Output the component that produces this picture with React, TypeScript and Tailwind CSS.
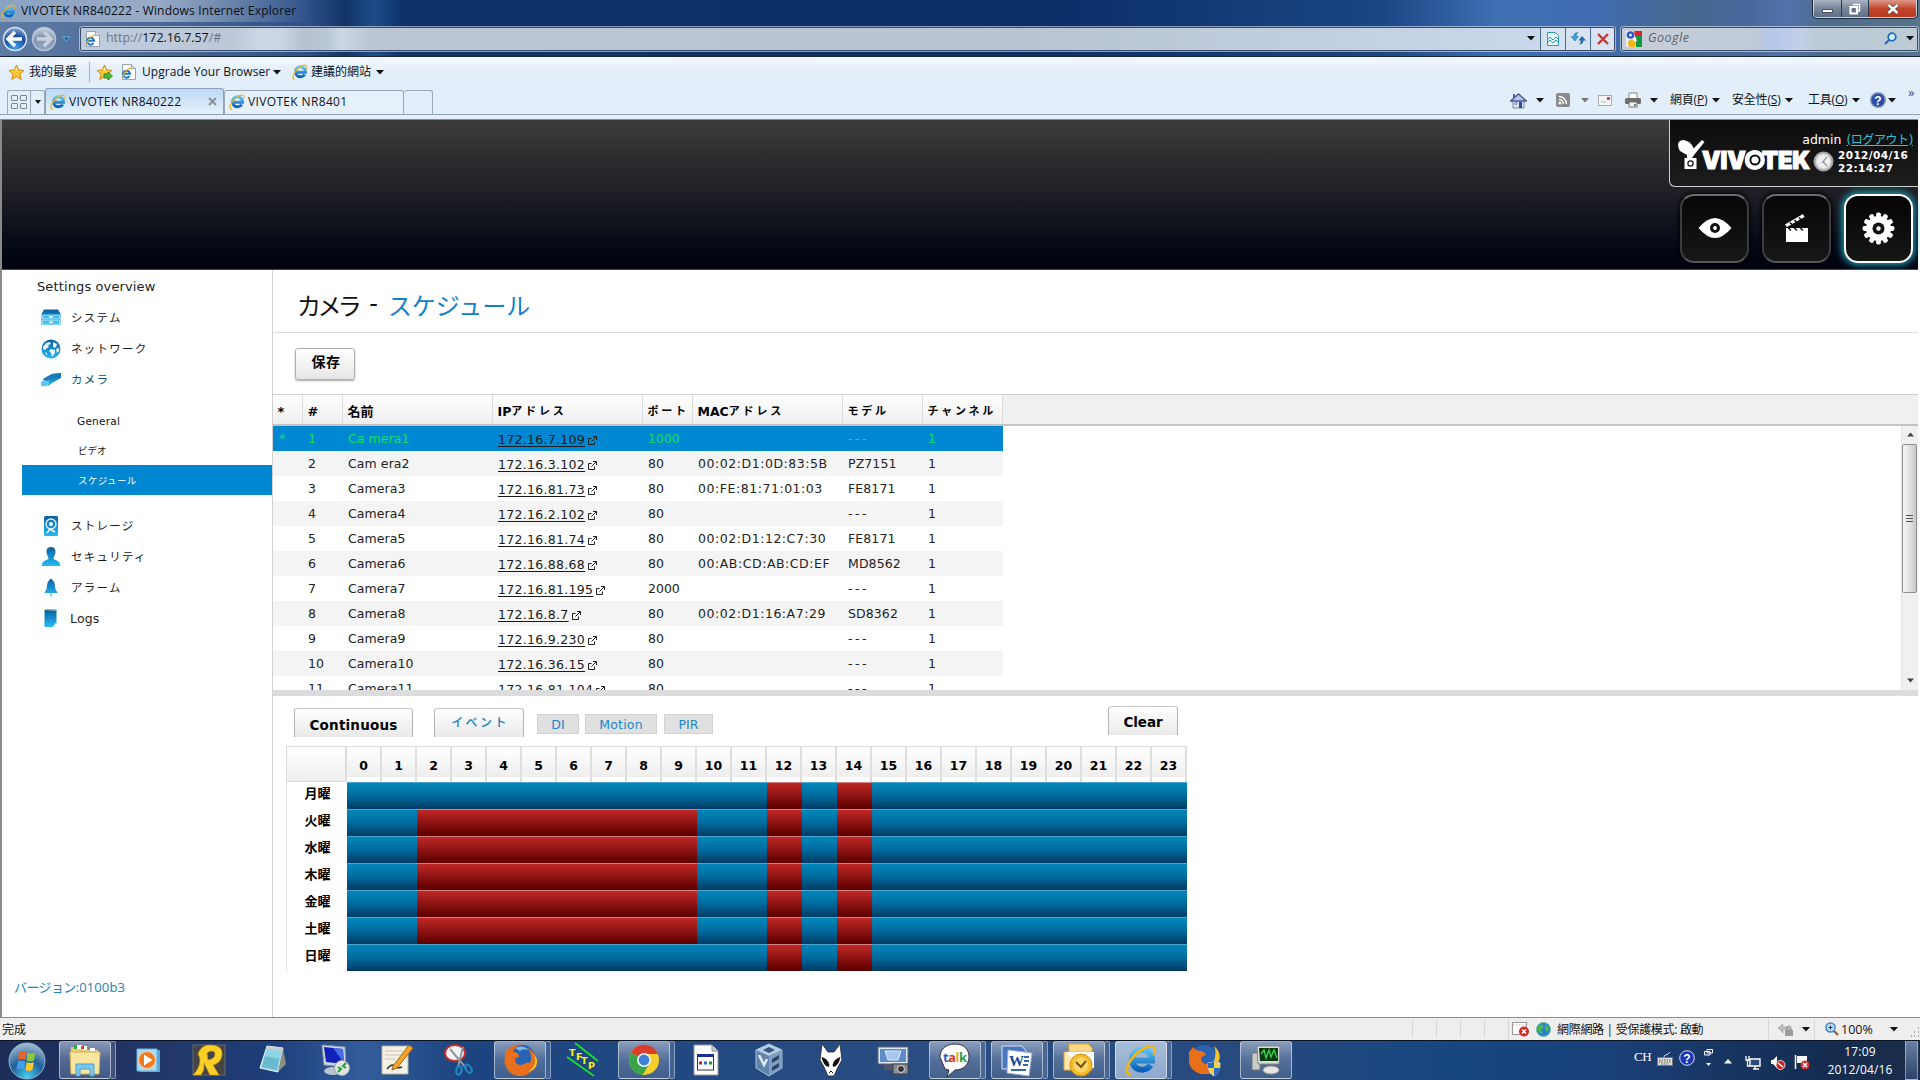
import React from "react";

const UI = "font-['Open_Sans','Noto_Sans_CJK_TC',sans-serif]";
const VERDANA = "font-['DejaVu_Sans','Noto_Sans_CJK_JP',sans-serif]";

/* ---------- small shared icons ---------- */

function Caret({ color = "#111", className = "" }: { color?: string; className?: string }) {
  return (
    <svg className={`shrink-0 ${className}`} width="8" height="5" viewBox="0 0 8 5">
      <path d="M0 0h8L4 4.5z" fill={color} />
    </svg>
  );
}

function IeIcon({ size = 16, className = "" }: { size?: number; className?: string }) {
  return (
    <svg className={`shrink-0 ${className}`} width={size} height={size} viewBox="0 0 32 32">
      <defs>
        <linearGradient id="ieg" x1="0" y1="0" x2="0" y2="1">
          <stop offset="0" stopColor="#5cc4f5" />
          <stop offset="1" stopColor="#0a62b8" />
        </linearGradient>
      </defs>
      <path d="M25.500 21A10 10 0 1 1 27 16.500H9" fill="none" stroke="url(#ieg)" strokeWidth="6" />
      <path d="M29 3C24 0 12 7 6 16S1 31 6 30" fill="none" stroke="#f0b41c" strokeWidth="2.600" />
      <path d="M29 3c2 1.500 1 5-1 8" fill="none" stroke="#f0b41c" strokeWidth="2" />
    </svg>
  );
}

function IePage({ className = "" }: { className?: string }) {
  return (
    <svg className={`shrink-0 ${className}`} width="15" height="16" viewBox="0 0 15 16">
      <path d="M1.500.500h9l4 4v11h-13z" fill="#fff" stroke="#9aa3ad" />
      <path d="M10.500.500v4h4" fill="#dde4ea" stroke="#9aa3ad" />
      <path d="M8.500 12A3.500 3.500 0 1 1 9 9.800H3" fill="none" stroke="#1a7ac9" strokeWidth="2" />
      <path d="M10 4.500C7 4 2 9 1.500 13.500" fill="none" stroke="#e8ae1a" strokeWidth="1.200" />
    </svg>
  );
}

function Star({ plus = false }: { plus?: boolean }) {
  return (
    <svg className="shrink-0" width="17" height="17" viewBox="0 0 17 17">
      <path d="M8.500 1l2.200 5 5.300.5-4 3.600 1.200 5.400-4.700-2.900-4.700 2.900L5 10.100l-4-3.600 5.300-.5z" fill="#fdc436" stroke="#d88a10" />
      <path d="M8.500 3l1.300 3.600H7z" fill="#fff2b0" />
      {plus && <path d="M8 10h4V8l4.500 4L12 16v-2H8z" fill="#4fbf3a" stroke="#1d7a18" strokeWidth=".8" />}
    </svg>
  );
}

/* ---------- browser frame ---------- */

function TitleBar() {
  return (
    <div className="flex h-[26px] items-start justify-between">
      <div className="flex h-[22px] w-[312px] items-center rounded-r-full bg-gradient-to-r from-[#9db2ce]/70 via-[#b9c8dc]/70 to-transparent">
        <IeIcon size={15} className="ml-[1px]" />
        <span className="ml-[5px] whitespace-nowrap text-[12px] leading-none tracking-[0.17px] text-[#0b0f18]">VIVOTEK NR840222 - Windows Internet Explorer</span>
      </div>
      <div className="mr-[3px] flex h-[18px] overflow-hidden rounded-b-[4px] border border-t-0 border-white/70 outline outline-1 outline-[#1d2a3c]">
        <div className="flex w-[28px] items-end justify-center border-r border-[#2c3a4e] bg-gradient-to-b from-[#a9b4c2] via-[#79869a] to-[#5d6f87] pb-[4px]">
          <span className="h-[4px] w-[11px] border border-[#4b5565] bg-white" />
        </div>
        <div className="flex w-[27px] items-center justify-center border-r border-[#2c3a4e] bg-gradient-to-b from-[#a9b4c2] via-[#79869a] to-[#5d6f87]">
          <svg width="12" height="12" viewBox="0 0 12 12">
            <path d="M4 1.500h6.500V8H8" fill="none" stroke="#fff" strokeWidth="1.600" />
            <rect x="1.500" y="4" width="6.500" height="6.500" fill="none" stroke="#fff" strokeWidth="2" />
            <path d="M4 6.500h1.500" stroke="#333" />
          </svg>
        </div>
        <div className="flex w-[47px] items-center justify-center bg-gradient-to-b from-[#dd9a8a] via-[#c2452c] to-[#b63a22]">
          <svg width="12" height="10" viewBox="0 0 12 10">
            <path d="M1.500 1l9 8M10.500 1l-9 8" stroke="#444" strokeWidth="4" />
            <path d="M1.500 1l9 8M10.500 1l-9 8" stroke="#fff" strokeWidth="2.600" />
          </svg>
        </div>
      </div>
    </div>
  );
}

function NavButton({ active }: { active: boolean }) {
  return (
    <svg className="shrink-0" width="26" height="26" viewBox="0 0 26 26">
      <defs>
        <radialGradient id={active ? "nb1" : "nb0"} cx=".5" cy=".9" r=".9">
          <stop offset="0" stopColor={active ? "#3fa5ee" : "#93a5bd"} />
          <stop offset=".6" stopColor={active ? "#1b4b9c" : "#8597b3"} />
          <stop offset="1" stopColor={active ? "#8fb0dd" : "#cbd5e3"} />
        </radialGradient>
      </defs>
      <circle cx="13" cy="13" r="11.500" fill={`url(#${active ? "nb1" : "nb0"})`} stroke={active ? "#d6e2f2" : "#b6c3d6"} strokeWidth="1.500" />
      {active ? (
        <path d="M13 6L6 13l7 7M6.500 13H20" fill="none" stroke="#fff" strokeWidth="3.400" />
      ) : (
        <path d="M13 6l7 7-7 7M19.500 13H6" fill="none" stroke="#c8d2df" strokeWidth="3.400" />
      )}
    </svg>
  );
}

function NavBar() {
  return (
    <div className="flex h-[25px] items-center">
      <div className="flex w-[80px] items-center pl-[2px]">
        <NavButton active />
        <div className="ml-[3px] flex"><NavButton active={false} /></div>
        <svg className="ml-[5px]" width="9" height="6" viewBox="0 0 9 6"><path d="M1 1h7L4.500 5z" fill="#1c4f8e" stroke="#63b7e6" /></svg>
      </div>
      <div className="flex h-[24px] w-[1535px] items-center rounded-[2px] border border-[#3b4d68] bg-[linear-gradient(90deg,#bfccdd_0%,#bcc8d8_10%,#cbd6e5_11.500%,#cbd6e5_13%,#b6c2d2_14.500%,#b9c6d6_16%,#cbd6e6_17%,#bac6d4_19%,#b7c3d1_60%,#ccdaef_100%)] outline outline-1 outline-white/50">
        <IePage className="ml-[4px]" />
        <span className="ml-[6px] flex-1 text-[12.500px] tracking-[-0.06px] text-[#6e7782]">http://<span className="text-[#101418]">172.16.7.57</span>/#</span>
        <Caret className="mr-[5px]" />
        <div className="flex h-full w-[25px] items-center justify-center border-l border-[#4a6a98] bg-white/25">
          <svg width="12" height="14" viewBox="0 0 12 14"><path d="M.5.500h8l3 3v10H.5z" fill="#e9f8fb" stroke="#2a9db8" /><path d="M0 8l3-3 3 3 3-3 3 3M0 11l3-3 3 3 3-3 3 3" fill="none" stroke="#2a9db8" /></svg>
        </div>
        <div className="flex h-full w-[25px] items-center justify-center border-l border-[#4a6a98] bg-white/25">
          <svg width="15" height="13" viewBox="0 0 15 13"><path d="M0 4.500L4 9l3.500-4.500H5.200Q5 2 7 .5 2.800.5 2.600 4.500z" fill="#35a2d8" stroke="#1b6fa8" strokeWidth=".5" /><path d="M7.500 8.500L11 4l4 4.500h-2.600q-.2 4-4.400 4 2-1.500 1.800-4z" fill="#2468ae" /></svg>
        </div>
        <div className="flex h-full w-[24px] items-center justify-center border-l border-[#4a6a98] bg-white/25">
          <svg width="12" height="12" viewBox="0 0 12 12"><path d="M1 1l10 10M11 1L1 11" stroke="#c4382c" strokeWidth="2.400" /></svg>
        </div>
      </div>
      <div className="ml-[6px] flex h-[24px] w-[297px] items-center rounded-[2px] border border-[#3b4d68] bg-[linear-gradient(90deg,#c6ced8_0%,#bfcbd8_46%,#b4c6ea_50%,#c2cfe8_60%,#bccbd6_66%)] outline outline-1 outline-white/50">
        <svg className="ml-[4px]" width="16" height="16" viewBox="0 0 16 16">
          <rect width="16" height="16" fill="#e9edf6" />
          <path d="M8 0h8v6H9z" fill="#e0202c" /><path d="M10 5h6v11h-6z" fill="#119a43" />
          <circle cx="4.500" cy="4" r="3.800" fill="#2a57c4" /><circle cx="6" cy="12.500" r="4" fill="#f5b516" />
          <circle cx="4.500" cy="4" r="1.600" fill="#cfdcf6" /><path d="M7 8l3-1 1 3-3 1z" fill="#fff" />
        </svg>
        <span className="ml-[6px] flex-1 text-[12.500px] italic tracking-[0.5px] text-[#5d646c]">Google</span>
        <svg className="mr-[9px]" width="13" height="13" viewBox="0 0 13 13"><circle cx="8" cy="5" r="3.800" fill="#d9efff" stroke="#1f6fc0" strokeWidth="1.800" /><path d="M5.500 7.500L1 12" stroke="#1f6fc0" strokeWidth="2.200" /></svg>
        <Caret className="mr-[3px]" />
      </div>
    </div>
  );
}

function FavoritesBar() {
  return (
    <div className="flex h-[32px] items-center whitespace-nowrap pb-[1px] text-[12px] text-[#0d1524]">
      <div className="ml-[8px]"><Star /></div>
      <span className="ml-[4px] w-[60px]">我的最愛</span>
      <span className="h-[20px] w-px bg-[#a6b1bf]" />
      <div className="ml-[6px]"><Star plus /></div>
      <IePage className="ml-[8px]" />
      <span className="ml-[6px] w-[131px] text-[12px] tracking-[0.05px]">Upgrade Your Browser</span>
      <Caret />
      <IeIcon className="ml-[11px]" />
      <span className="ml-[3px] w-[65px]">建議的網站</span>
      <Caret />
    </div>
  );
}

const menu = [
  { label: "網頁", key: "P", box: "w-[62px]" },
  { label: "安全性", key: "S", box: "w-[76px]" },
  { label: "工具", key: "O", box: "w-[59px]" },
];

function TabRow() {
  return (
    <div className="flex h-[26px] items-end border-b border-[#8fa3b8] text-[12px] text-[#0d1524]">
      <div className="ml-[7px] flex h-[24px] w-[38px] rounded-t-[3px] border border-b-0 border-[#9aa7b5]">
        <div className="grid w-[23px] grid-cols-2 place-content-center gap-[2px] border-r border-[#9aa7b5] px-[3px]">
          <i className="h-[6px] w-[7px] rounded-[1px] border border-[#7f8896]" /><i className="h-[6px] w-[7px] rounded-[1px] border border-[#7f8896]" />
          <i className="h-[6px] w-[7px] rounded-[1px] border border-[#7f8896]" /><i className="h-[6px] w-[7px] rounded-[1px] border border-[#7f8896]" />
        </div>
        <div className="flex flex-1 items-center justify-center"><svg width="6" height="4"><path d="M0 0h6L3 4z" fill="#111" /></svg></div>
      </div>
      <div className="flex h-[26px] w-[179px] items-center rounded-t-[3px] border border-b-0 border-[#8fa1b6] bg-gradient-to-b from-[#bcd9f6] to-[#e6f1fb] pt-px">
        <IeIcon className="ml-[4px]" />
        <span className="ml-[3px] flex-1 whitespace-nowrap tracking-[0.25px]">VIVOTEK NR840222</span>
        <svg className="mr-[6px]" width="9" height="9"><path d="M1 1l7 7M8 1L1 8" stroke="#8a8f96" strokeWidth="2" /></svg>
      </div>
      <div className="flex h-[24px] w-[180px] items-center rounded-t-[3px] border border-b-0 border-[#9aa7b5] bg-[#e6f0fa]">
        <IeIcon className="ml-[4px]" />
        <span className="ml-[3px] tracking-[0.35px]">VIVOTEK NR8401</span>
      </div>
      <div className="h-[24px] w-[29px] rounded-t-[3px] border border-b-0 border-l-0 border-[#9aa7b5]" />
      <div className="ml-auto flex h-[26px] w-[410px] items-center pb-[1px]">
        <svg className="shrink-0" width="17" height="17" viewBox="0 0 17 17"><path d="M3 2h2v4H3z" fill="#4a62b8" /><path d="M3 8h11v8H3z" fill="#dfe6f2" stroke="#7a86a0" /><path d="M.5 9L8.500 2l8 7z" fill="#b9c6e6" stroke="#4a5a94" strokeWidth="1.400" /><path d="M9 10h3v6H9z" fill="#2b4aa0" /><path d="M4.500 10h3v3h-3z" fill="#8fa5d6" /></svg>
        <Caret className="ml-[9px]" />
        <svg className="ml-[12px] shrink-0" width="14" height="14" viewBox="0 0 14 14"><rect width="14" height="14" rx="2" fill="#8a8a8a" /><circle cx="4" cy="10" r="1.500" fill="#fff" /><path d="M3 6.500a4.500 4.500 0 0 1 4.500 4.500M3 3.500A7.500 7.500 0 0 1 10.500 11" fill="none" stroke="#fff" strokeWidth="1.400" /></svg>
        <Caret className="ml-[11px]" color="#777" />
        <svg className="ml-[9px] shrink-0" width="14" height="11" viewBox="0 0 14 11"><rect x=".5" y=".5" width="13" height="10" fill="#f7f7f7" stroke="#a9a9a9" /><path d="M9 2h3v3H9z" fill="#e0444e" /><path d="M3 7h5" stroke="#bbb" /></svg>
        <svg className="ml-[13px] shrink-0" width="16" height="16" viewBox="0 0 16 16"><path d="M4 1h8v6H4z" fill="#fff" stroke="#888" /><rect y="6" width="16" height="6" rx="1.500" fill="#6d6d6d" /><path d="M4 10h8v5H4z" fill="#f2f2f2" stroke="#777" /><path d="M9 12h2v2H9z" fill="#5b9a50" /></svg>
        <Caret className="ml-[9px] mr-[12px]" />
        {menu.map((m) => (
          <div key={m.key} className={`flex shrink-0 items-center whitespace-nowrap text-[12px] tracking-[-0.2px] ${m.box}`}>
            {m.label}(<u>{m.key}</u>)<Caret className="ml-[5px]" />
          </div>
        ))}
        <svg className="ml-[3px] shrink-0" width="16" height="16" viewBox="0 0 16 16"><circle cx="8" cy="8" r="7.300" fill="#2c4fae" stroke="#8c97ad" strokeWidth="1.400" /><text x="8" y="12.500" fontSize="12" fontWeight="bold" textAnchor="middle" fill="#fff" fontFamily="Liberation Sans">?</text></svg>
        <Caret className="ml-[2px]" />
        <span className="mb-[16px] ml-[12px] text-[13px] leading-none text-[#3a4e78]">»</span>
      </div>
    </div>
  );
}

/* ---------- page header ---------- */

function HeaderButton({ active = false, children }: { active?: boolean; children: React.ReactNode }) {
  return (
    <div
      className={
        active
          ? "flex size-[69px] items-center justify-center rounded-[14px] border-2 border-white bg-gradient-to-b from-[#050505] to-[#161717] shadow-[0_0_7px_2px_#1fa3b8]"
          : "flex size-[69px] items-center justify-center rounded-[14px] border-2 border-[#3c3d41] border-t-[#6a6b6e] border-b-[#55565a] bg-gradient-to-b from-[#070707] to-[#161717] shadow-[0_0_4px_1px_#000]"
      }
    >
      {children}
    </div>
  );
}

function PageHeader() {
  return (
    <header className="flex h-[150px] justify-end border-b border-[#444] bg-gradient-to-b from-[#3c3c3a] via-[#1b1c22] via-55% to-[#01020f]">
      <div className="flex w-[249px] flex-col">
        <div className="flex h-[67px] rounded-bl-[6px] border-b border-l border-[#d0d0d0] bg-gradient-to-b from-[#0c0c0c] to-[#1d1d1d]">
          <svg className="ml-[8px] mt-[18px] shrink-0" width="134" height="34" viewBox="0 0 134 34">
            <path d="M0 6q1-4 6-4l5 2q5 4 5 10l-2 4-5-1-7-4q-2-3-2-7z" fill="#fff" />
            <path d="M12 14L24 2l2.500 2L16 17l-3 4-4-4z" fill="#fff" />
            <path d="M9 16h6l-1 5H9z" fill="#fff" />
            <rect x="6.500" y="20" width="12" height="11" fill="#fff" />
            <circle cx="12.500" cy="25.500" r="2.600" fill="none" stroke="#111" strokeWidth="1.200" />
            <text x="24" y="30.500" textLength="108" lengthAdjust="spacingAndGlyphs" fontFamily="Inter" fontWeight="900" fontSize="24.500" fill="#fff" stroke="#fff" strokeWidth="1.200">VIVOTEK</text>
            <circle cx="77" cy="22" r="10" fill="#fff" /><circle cx="77" cy="22" r="4.600" fill="#fff" stroke="#111" strokeWidth="2" />
          </svg>
          <div className="-ml-[14px] flex w-[120px] shrink-0 flex-col">
            <div className="mt-[11px] flex h-[18px] items-center justify-end whitespace-nowrap pr-[5px] text-[12.500px] text-white">
              admin<span className="ml-[5px] text-[12px] tracking-[-0.400px] text-[#2fc0d6] underline">(ログアウト)</span>
            </div>
            <div className="flex items-center">
              <svg className="ml-[15px] shrink-0" width="21" height="21" viewBox="0 0 21 21"><circle cx="10.500" cy="10.500" r="9" fill="#d8d8d8" stroke="#a5a5a5" strokeWidth="2" /><circle cx="10.500" cy="10.500" r="6.500" fill="#efefef" /><path d="M10.500 11l3.500 4M9 12l5-6" stroke="#999" strokeWidth="1.200" /></svg>
              <div className="ml-[4px] whitespace-nowrap text-[10.500px] font-bold leading-[13px] tracking-[0.4px] text-white">2012/04/16<br />22:14:27</div>
            </div>
          </div>
        </div>
        <div className="mt-[7px] flex gap-[13px] pl-[11px]">
          <HeaderButton>
            <svg width="34" height="22" viewBox="0 0 34 22"><path d="M.5 11Q9 1 17 1t16.500 10Q25 21 17 21T.5 11z" fill="#fff" /><circle cx="17" cy="11" r="5" fill="#111" /><circle cx="17" cy="11" r="1.900" fill="#fff" /></svg>
          </HeaderButton>
          <HeaderButton>
            <svg width="26" height="30" viewBox="0 0 26 30"><path d="M2 15h22v14H2z" fill="#fff" /><path d="M4 14.500l3 3M10 14.500l3 3M16 14.500l3 3" stroke="#111" strokeWidth="1.500" /><path d="M1 11.500L19 1l1.500 3L3 14z" fill="#fff" /><path d="M6 9.500l2 2M10.500 7l2 2M15 4.500l2 2" stroke="#111" strokeWidth="1.600" /></svg>
          </HeaderButton>
          <HeaderButton active>
            <svg width="33" height="33" viewBox="-16.5 -16.5 33 33">
              <circle r="12.500" fill="#fff" />
              {Array.from({ length: 12 }, (_, i) => <rect key={i} x="-2.4" y="-16" width="4.800" height="8" rx="1.800" fill="#fff" transform={`rotate(${i * 30})`} />)}
              <circle r="6" fill="#111" /><circle r="2.200" fill="#fff" />
            </svg>
          </HeaderButton>
        </div>
      </div>
    </header>
  );
}

/* ---------- sidebar ---------- */

function SideIcon({ kind }: { kind: string }) {
  return (
    <svg className="shrink-0" width="20" height="20" viewBox="0 0 20 20">
      <defs>
        <linearGradient id="sg" x1="0" y1="0" x2="0" y2="1"><stop offset="0" stopColor="#0a5fa0" /><stop offset="1" stopColor="#25baf5" /></linearGradient>
      </defs>
      {kind === "system" && <g><path d="M3 1.500h14l2.500 4.500v11H.5V6z" fill="url(#sg)" /><path d="M1.500 7h17v4h-17zM1.500 12.200h17v4h-17z" fill="#3cc0f4" stroke="#bfeafc" strokeWidth=".8" /><path d="M8 9h4M8 14.200h4" stroke="#fff" strokeWidth="1.400" /></g>}
      {kind === "network" && <g><circle cx="10" cy="10" r="9.500" fill="url(#sg)" /><path d="M2 8l3-4 4-1 1 2-3 1 1 2-2 1-2 2-2-1zM12 3l4 2-1 3-2 1-1-2zM10 10l4 1 0 3-3 4-1-4-2-2zM15 10l3-1 0 3-2 2zM4 13l2 1 0 3z" fill="#e8f8ff" /></g>}
      {kind === "camera" && <g><path d="M2 9L11 4l9-1v5l-9 5-4 3z" fill="url(#sg)" /><path d="M0 12l4-3 4 1v4l-4 2.500-4-.5z" fill="#57c9f5" /><path d="M2 9l9-5 9-1-1 2-8 2-5 4z" fill="#1d78b8" /></g>}
      {kind === "storage" && <g><rect x="3" y="0" width="14" height="20" rx="1.500" fill="url(#sg)" /><circle cx="10" cy="8" r="5" fill="none" stroke="#d8f2ff" strokeWidth="1.400" /><circle cx="10" cy="8" r="2" fill="#fff" /><path d="M6 17l3-4 5 3" fill="none" stroke="#fff" strokeWidth="1.500" /></g>}
      {kind === "security" && <path d="M10 0c4 0 4.500 3 4.500 5S13 9.500 12.500 11.500c0 1.500 6.500 2 6.500 6V19H1v-1.500c0-4 6.500-4.500 6.500-6C7 9.500 5.500 7 5.500 5S6 0 10 0z" fill="url(#sg)" />}
      {kind === "alarm" && <path d="M10 1c1 0 1.500.5 1.500 1.300C14.500 4 13.500 8 14.500 11c.5 2 2 2.500 2 4h-13c0-1.500 1.500-2 2-4 1-3 0-7 3-8.700C8.500 1.500 9 1 10 1zM9.400 15.500h1.200v3H9.400z" fill="url(#sg)" />}
      {kind === "logs" && <g><path d="M3.500 1h12v14l-3 3h-9z" fill="url(#sg)" /><path d="M15.500 13v5h-4z" fill="#e2f6ff" /><path d="M3.500 1l2-1h10v2z" fill="#8bb" /></g>}
    </svg>
  );
}

function SideItem({ kind, label, tone = "text-[#1c1c1c]", latin = false }: { kind: string; label: string; tone?: string; latin?: boolean }) {
  return (
    <div className={`flex h-[31px] items-center pl-[39px] ${tone}`}>
      <SideIcon kind={kind} />
      <span className={latin ? "ml-[9px] text-[12.500px] tracking-[0.15px]" : "ml-[10px] text-[11.500px] tracking-[1.250px]"}>{label}</span>
    </div>
  );
}

function Sidebar() {
  return (
    <aside className="flex w-[271px] shrink-0 flex-col border-r border-[#d2d2d2]">
      <div className="mt-[8px] h-[25px] pl-[35px] text-[13px] leading-[17px] tracking-[0.12px] text-[#222]">Settings overview</div>
      <SideItem kind="system" label="システム" />
      <SideItem kind="network" label="ネットワーク" />
      <SideItem kind="camera" label="カメラ" tone="text-[#0a5577]" />
      <div className="mt-[11px] text-[#111]">
        <div className="flex h-[30px] items-center pl-[75px] text-[10.500px] tracking-[0.25px]">General</div>
        <div className="flex h-[28px] items-center pl-[76px] pt-px text-[9.500px]">ビデオ</div>
        <div className="ml-[20px] flex h-[30px] items-center bg-[#0087d1] pl-[56px] pt-[2px] text-[9.500px] tracking-[0.4px] text-white">スケジュール</div>
      </div>
      <div className="mt-[16px]">
        <SideItem kind="storage" label="ストレージ" />
        <SideItem kind="security" label="セキュリティ" />
        <SideItem kind="alarm" label="アラーム" />
        <SideItem kind="logs" label="Logs" latin />
      </div>
      <div className="mb-[21px] mt-auto pl-[12px] font-['Open_Sans','Noto_Sans_CJK_JP',sans-serif] text-[13px] leading-[18px] text-[#1b82b8]"><span className="tracking-[-0.6px]">バージョン</span><span className="tracking-[0.1px]">:0100b3</span></div>
    </aside>
  );
}

/* ---------- camera table ---------- */

const cols = "grid grid-cols-[30px_40px_150px_150px_50px_150px_80px_80px] w-[730px]";
const headings = ["*", "#", "名前", "IPアドレス", "ポート", "MACアドレス", "モデル", "チャンネル"];

const cameras = [
  ["Ca mera1", "172.16.7.109", "1000", "", "---"],
  ["Cam era2", "172.16.3.102", "80", "00:02:D1:0D:83:5B", "PZ7151"],
  ["Camera3", "172.16.81.73", "80", "00:FE:81:71:01:03", "FE8171"],
  ["Camera4", "172.16.2.102", "80", "", "---"],
  ["Camera5", "172.16.81.74", "80", "00:02:D1:12:C7:30", "FE8171"],
  ["Camera6", "172.16.88.68", "80", "00:AB:CD:AB:CD:EF", "MD8562"],
  ["Camera7", "172.16.81.195", "2000", "", "---"],
  ["Camera8", "172.16.8.7", "80", "00:02:D1:16:A7:29", "SD8362"],
  ["Camera9", "172.16.9.230", "80", "", "---"],
  ["Camera10", "172.16.36.15", "80", "", "---"],
  ["Camera11", "172.16.81.104", "80", "", "---"],
];

function HeadingText({ text }: { text: string }) {
  const m = text.match(/^([A-Z]*)(.*)$/)!;
  const kana = /[\u30a0-\u30ff]/.test(m[2]);
  return (
    <>
      {m[1]}
      <span className={kana ? "text-[11px] tracking-[2.800px]" : "text-[13px]"}>{m[2]}</span>
    </>
  );
}

function CameraTable() {
  return (
    <div>
      <div className="flex h-[32px] border-b-2 border-t border-b-[#c4c4c4] border-t-[#cfcfcf] bg-[#f0f0f0]">
        <div className={`${cols} bg-gradient-to-b from-white to-[#eeeeee] text-[12.500px] font-bold text-black`}>
          {headings.map((h) => (
            <div key={h} className="flex items-center whitespace-nowrap border-r border-[#dcdcdc] pl-[4.500px] pt-[5px] leading-none"><span className="flex items-center"><HeadingText text={h} /></span></div>
          ))}
        </div>
      </div>
      <div className="flex h-[264px] overflow-hidden">
        <div className="flex-1">
          {cameras.map(([name, ip, port, mac, model], i) => (
            <div key={name} className={`${cols} h-[25px] items-center pt-[2px] text-[12.500px] ${i === 0 ? "bg-[#0087d1] text-[#12e25a]" : i % 2 ? "bg-[#f4f4f4] text-[#222]" : "text-[#222]"}`}>
              <span className="pl-[6px]">{i === 0 ? "*" : ""}</span>
              <span className="pl-[5px]">{i + 1}</span>
              <span className="pl-[5px] tracking-[0.08px]">{name}</span>
              <span className="flex items-center pl-[5px] pt-[2px] text-[#1a1a1a]">
                <span className="tracking-[0.3px] underline underline-offset-2">{ip}</span>
                <svg className="ml-[3px] mt-[1px]" width="9" height="9" viewBox="0 0 9 9"><path d="M3.500 2.500h-3v6h6v-3M5 .5h3.500V4M8.500.5L3.500 5.500" fill="none" stroke="#222" /></svg>
              </span>
              <span className="pl-[5px]">{port}</span>
              <span className="pl-[5px] tracking-[0.54px]">{mac}</span>
              <span className="pl-[5px] tracking-[0.1px]">{model === "---" ? <span className="tracking-[2.500px]">---</span> : model}</span>
              <span className="pl-[5px]">1</span>
            </div>
          ))}
        </div>
        <div className="flex w-[17px] flex-col items-center border-l border-[#e4e4e4] bg-[#f0f0f0]">
          <div className="flex h-[18px] items-center"><svg width="7" height="5"><path d="M0 4.500h7L3.500.5z" fill="#444" /></svg></div>
          <div className="flex h-[149px] w-[15px] flex-col items-center justify-center gap-[2px] self-start rounded-[2px] border border-[#8f8f8f] bg-gradient-to-r from-[#f5f5f5] via-[#e2e2e2] to-[#c9c9c9]">
            <i className="h-[1px] w-[7px] bg-[#555]" /><i className="h-[1px] w-[7px] bg-[#555]" /><i className="h-[1px] w-[7px] bg-[#555]" />
          </div>
          <div className="mt-auto flex h-[18px] items-center"><svg width="7" height="5"><path d="M0 .5h7L3.500 4.500z" fill="#444" /></svg></div>
        </div>
      </div>
      <div className="h-[6px] bg-[#dcdcdc]" />
    </div>
  );
}

/* ---------- schedule ---------- */

const days = ["月曜", "火曜", "水曜", "木曜", "金曜", "土曜", "日曜"];
const hours = Array.from({ length: 24 }, (_, h) => h);
const isEvent = (d: number, h: number) => h === 12 || h === 14 || (d >= 1 && d <= 5 && h >= 2 && h <= 9);

const tabButton = "flex items-center justify-center rounded-t-[3px] border border-b-0 border-[#b4b4b4] border-t-[#c8c8c8] bg-gradient-to-b from-white to-[#e9e9e9]";
const chip = "flex h-[20px] items-center justify-center border border-[#d2d2d2] bg-[#e0e0e0] pt-[2px] text-[12.500px] text-[#1b87c9]";

function Schedule() {
  return (
    <div className="pl-[13px] pt-[10px]">
      <div className="flex h-[40px] pl-[8px]">
        <div className={`${tabButton} mt-[2px] h-[29px] w-[119px] pt-[4px] text-[13.500px] font-bold tracking-[0.2px] text-black`}>Continuous</div>
        <div className={`${tabButton} ml-[21px] mt-[2px] h-[29px] w-[90px] pl-[2px] text-[12px] font-medium tracking-[2.400px] text-[#1583c2]`}>イベント</div>
        <div className={`${chip} ml-[13px] mt-[8px] w-[42px]`}>DI</div>
        <div className={`${chip} ml-[6px] mt-[8px] w-[72px] tracking-[0.2px]`}>Motion</div>
        <div className={`${chip} ml-[7px] mt-[8px] w-[49px]`}>PIR</div>
        <div className={`${tabButton} ml-[395px] h-[29px] w-[70px] pt-[2px] text-[13.500px] font-bold tracking-[-0.1px] text-black`}>Clear</div>
      </div>
      <div className="grid w-[901px] grid-cols-[60px_repeat(24,35px)] border-l border-[#dcdcdc]">
        <div className="h-[36px] border-b border-r-2 border-t border-[#dcdcdc] bg-gradient-to-b from-white to-[#eeeeee]" />
        {hours.map((h) => (
          <div key={h} className="flex h-[36px] justify-center border-r-2 border-t border-[#dedede] bg-white">
            <span className="flex h-[30px] w-full items-center justify-center bg-gradient-to-b from-white to-[#eeeeee] pt-[8px] text-[12.500px] font-bold text-black">{h}</span>
          </div>
        ))}
        {days.map((d, di) => (
          <React.Fragment key={d}>
            <div className="flex h-[27px] items-center justify-center pb-[3px] pl-px text-[13px] font-bold text-black">{d}</div>
            {hours.map((h) => (
              <div
                key={h}
                className={
                  isEvent(di, h)
                    ? "h-[27px] border-t border-[#d08080] bg-gradient-to-b from-[#c02826] to-[#5c0000]"
                    : "h-[27px] border-t border-[#4aa6cf] bg-gradient-to-b from-[#0088bb] via-[#006a9d] to-[#003c64]"
                }
              />
            ))}
          </React.Fragment>
        ))}
      </div>
    </div>
  );
}

/* ---------- status bar and taskbar ---------- */

function StatusBar() {
  return (
    <div className={`flex h-[23px] items-center border-t border-[#8c8c8c] bg-[#f0eeed] text-[12px] text-[#111] ${UI}`}>
      <span className="flex-1 pl-[2px] pt-[2px]">完成</span>
      {[0, 1, 2, 3].map((i) => <span key={i} className="h-[18px] w-[24px] border-l border-[#d8d6d4]" />)}
      <div className="flex h-[20px] w-[260px] items-center border-l border-[#d8d6d4] pl-[3px]">
        <svg width="18" height="16" viewBox="0 0 18 16"><rect x=".5" y="1.500" width="14" height="12" fill="#fff" stroke="#999" /><path d="M1 4h13" stroke="#bbb" strokeDasharray="1.500" /><circle cx="12" cy="10.500" r="5" fill="#d02a22" /><path d="M10 8.500l4 4M14 8.500l-4 4" stroke="#fff" strokeWidth="1.600" /></svg>
        <svg className="ml-[6px]" width="15" height="15" viewBox="0 0 15 15"><circle cx="7.500" cy="7.500" r="7" fill="#2d7fd0" stroke="#5b8" strokeWidth=".8" /><path d="M2 4l4-2 2 3-3 3 2 4-3-1-3-4zM9 2l4 3-1 5-3-2z" fill="#49b84c" /></svg>
        <span className="ml-[6px] whitespace-nowrap pt-[2px] tracking-[-0.300px]">網際網路 | 受保護模式: 啟動</span>
      </div>
      <div className="flex h-[20px] w-[46px] items-center border-l border-[#d8d6d4] pl-[8px]">
        <svg width="17" height="15" viewBox="0 0 17 15"><path d="M1 6l5-4v3q5-1 8 2v2q-5-3-8-1v3z" fill="#bbb" stroke="#999" strokeWidth=".5" /><rect x="8" y="8" width="8" height="6" fill="#9a9a9a" /><path d="M10 8V6a2 2 0 0 1 4 0v2" fill="none" stroke="#888" /></svg>
        <Caret className="ml-[8px]" />
      </div>
      <div className="flex h-[20px] w-[106px] items-center border-l border-[#d8d6d4] pl-[10px]">
        <svg width="14" height="14" viewBox="0 0 14 14"><circle cx="5.500" cy="5.500" r="4.500" fill="#bfe2fa" stroke="#3c86c8" strokeWidth="1.500" /><path d="M9 9l4 4" stroke="#8a6a3a" strokeWidth="2.400" /><path d="M3.500 5.500h4M5.500 3.500v4" stroke="#225" /></svg>
        <span className="ml-[2px] w-[49px] pt-[2px] text-[12.500px]">100%</span>
        <Caret />
        <svg className="ml-auto mt-[6px]" width="10" height="10"><path d="M8 1h1M8 5h1M8 9h1M4 5h1M4 9h1M1 9h1" stroke="#aaa" strokeWidth="2" /></svg>
      </div>
    </div>
  );
}

const S = ({ children }: { children: React.ReactNode }) => <svg width="34" height="36" viewBox="0 0 34 36">{children}</svg>;

const icons: Record<string, React.ReactNode> = {
  explorer: <S><path d="M3 5h10l2 3h15v24H3z" fill="#eecb6a" /><path d="M6 3h4v4H6z" fill="#2fa84a" /><path d="M9 3h5v4H9zM14 4h5v4h-5zM22 6h5v3h-5z" fill="#fff" /><path d="M13 4h3v3h-3z" fill="#d8452d" /><path d="M2 10h30l-1 22H3z" fill="#f8e6a0" stroke="#d8b25a" /><path d="M8 34V22h18v12h-4v-7H12v7z" fill="#7cc8ec" stroke="#4a9fd0" /></S>,
  wmp: <S><path d="M10 8h20v22H10z" fill="#5aa6d8" /><path d="M7 7h20v22H7z" fill="#a9dcf4" stroke="#6db4dc" /><circle cx="17" cy="18" r="8.500" fill="#f07a1e" stroke="#fbd2a8" /><path d="M14 12.500l8.500 5.500-8.500 5.500z" fill="#fff" /></S>,
  ring: <S><rect x="1" y="3" width="32" height="30" fill="#454545" stroke="#6b6b6b" /><path fillRule="evenodd" d="M6 12Q9 3 18 3q13 0 12 10-1 8-9 10l6 10h-9l-6-12q1 7-3 12H1q7-7 7-15 0-3-2-6zm9-1l1 7q7-1 7-6 0-3-3-3-3 0-5 2z" fill="#fbcf26" stroke="#c99a10" strokeWidth=".6" /></S>,
  notepad: <S><path d="M13 4l16 2-5 24L6 26z" fill="#8fd4e6" stroke="#e6f7fb" /><path d="M29 6l3 16-8 8z" fill="#8a8d80" /><path d="M13 4l16 2-1 3-16-2z" fill="#ccc" /><path d="M11 14l14 3-2 11-15-3z" fill="#4fa9c0" opacity=".6" /></S>,
  remote: <S><path d="M5 3l23 2 1 20-22-2z" fill="#cfd6de" stroke="#8a95a3" /><path d="M7 5l19 2 1 15-18-2z" fill="#1220b8" /><path d="M16 6l10 1 1 14z" fill="#4a6ce8" /><ellipse cx="16" cy="29" rx="9" ry="4" fill="#b7c3cf" /><circle cx="25" cy="26" r="7.500" fill="#e2e6e2" stroke="#9aa" /><path d="M21 25l3 2-3 3M29 21l-3 3 3 2" fill="none" stroke="#2a9a3a" strokeWidth="2" /></S>,
  editor: <S><path d="M3 4h26v28H3z" fill="#f4f1e6" stroke="#b7b29f" /><path d="M6 9h18M6 13h18M6 17h10" stroke="#c9c4b4" /><path d="M8 27q5-6 7-3t8 1" fill="none" stroke="#333" strokeWidth="1.500" /><path d="M14 24L30 3l4 3-16 20-5 2z" fill="#f5a62a" stroke="#a8641a" /></S>,
  snip: <S><ellipse cx="14" cy="11" rx="10" ry="8" fill="#f3f3f3" stroke="#c82d28" strokeWidth="2" /><path d="M9 7l16 19M22 5l-5 20" stroke="#8a97a3" strokeWidth="2" /><ellipse cx="18" cy="28.500" rx="2.600" ry="4" transform="rotate(12 18 28)" fill="none" stroke="#1c8ac0" strokeWidth="2" /><ellipse cx="27.500" cy="27" rx="2.600" ry="4.500" transform="rotate(-35 27 27)" fill="none" stroke="#1c8ac0" strokeWidth="2" /></S>,
  firefox: <S><circle cx="17" cy="18" r="15.500" fill="#e66a16" /><circle cx="20" cy="14" r="11" fill="#2a63b4" /><path d="M12 6q8-4 14 2-6-2-9 1z" fill="#7fb7e6" /><path d="M2 10q2-2 4-4 2 4 6 4 4 1 4 5-4 0-4 4 3 6 9 3 3-2 6-1 3-8-2-15 9 6 7 15-3 13-15 13T2 20z" fill="#e8701a" /><path d="M31 12q4 12-6 18 10-2 9-13z" fill="#fbc22c" /></S>,
  tftp: <S><path d="M10 1l23 18M2 15l27 19" stroke="#18e02a" strokeWidth="1.800" /><g fill="#f5f01a" fontFamily="DejaVu Sans" fontWeight="bold" fontSize="9.500"><text x="4" y="14">T</text><text x="11" y="18">F</text><text x="16" y="22">T</text><text x="23" y="27">P</text></g></S>,
  chrome: <S><circle cx="17" cy="18" r="15" fill="#f7cf2a" /><path d="M17 18L4 10.500A15 15 0 0 0 15.500 33L23 21z" fill="#3aa548" /><path d="M17 18L4 10.500A15 15 0 0 1 31 12H17z" fill="#dc3c2c" /><circle cx="17" cy="18" r="7" fill="#f4f4f4" /><circle cx="17" cy="18" r="5.400" fill="#3f82d8" /></S>,
  doc: <S><path d="M5 3h18l6 6v24H5z" fill="#fff" stroke="#999" /><path d="M23 3v6h6" fill="#ccc" stroke="#888" /><rect x="8.500" y="13" width="16" height="15" fill="#fff" stroke="#333" /><path d="M8 12h17v3H8z" fill="#1c2c9c" /><path d="M10 21h3" stroke="#c22" strokeWidth="3" /><path d="M15 21h3" stroke="#36c" strokeWidth="3" /><path d="M20 21h3" stroke="#292" strokeWidth="3" /></S>,
  vbox: <S><path d="M17 2l13 6v18l-13 8L4 26V8z" fill="#5f84ac" stroke="#a8c2dc" /><path d="M17 2l13 6-13 6L4 8z" fill="#b4cbe2" /><path d="M17 5l6 3-6 3-6-3z" fill="#35587e" /><path d="M17 14v20l13-8V8z" fill="#7f9fc2" /><path d="M20 17l7-4v4l-7 4M20 25l7-4v4l-7 4" fill="#2c4666" /><path d="M7 13l5 10 3-6" fill="none" stroke="#e0ebf6" strokeWidth="2.500" /></S>,
  foobar: <S><path d="M8 2l6 8h6l6-8 2 16-4 7-4 9h-6l-4-9-4-7z" fill="#fff" stroke="#222" strokeWidth=".8" /><path d="M7.500 15q6 1 8 8l-1 2q-5-1-7-10zM26.500 15q-6 1-8 8l1 2q5-1 7-10z" fill="#111" /><path d="M15 31l2-2 2 2" stroke="#111" fill="none" /></S>,
  capture: <S><path d="M2 5h30v17H2z" fill="#dfe8f0" stroke="#667" /><path d="M4 7h26v13H4z" fill="#5f8cc8" /><path d="M9 9h16l-3 9H12z" fill="#a9c6ee" stroke="#d9e8fa" /><path d="M8 22h12v6H8z" fill="#556" /><rect x="17" y="22" width="15" height="10" fill="#8b8b94" stroke="#444" /><circle cx="25" cy="27" r="3.500" fill="#333" stroke="#ddd" /></S>,
  talk: <S><path d="M17 2C7 2 2 8 2 15t5 12l4 1-2 7 8-7c9 0 14-6 14-13S27 2 17 2z" fill="#fff" stroke="#333" /><g fontFamily="Open Sans" fontWeight="bold" fontSize="13"><text x="5" y="20" fill="#2a5bd0">t</text><text x="10" y="20" fill="#d8352a">a</text><text x="17.500" y="20" fill="#eeb41a">l</text><text x="21" y="20" fill="#2a9a40">k</text></g></S>,
  word: <S><path d="M2 4h20l4 5v18H2z" fill="#4a78c0" stroke="#d9e4f4" /><path d="M8 8l24 3-3 23-22-3z" fill="#fff" stroke="#9ab0d0" /><text x="9" y="24" fontFamily="Liberation Serif" fontWeight="bold" fontSize="15" fill="#1f4796">W</text><path d="M24 15h5M24 19h5M23 23h5M11 28h15" stroke="#3a66b0" strokeWidth="2" /></S>,
  outlook: <S><path d="M7 2h19l4 4v10H7z" fill="#f8d98a" stroke="#e8a828" /><path d="M2 10h28v18H2z" fill="#fbe8b4" stroke="#e8a828" /><path d="M4 10h28v16H20z" fill="#fff" /><circle cx="19" cy="23" r="11" fill="#f6bb2a" stroke="#d88f10" /><circle cx="19" cy="23" r="7.500" fill="#fbd76a" /><path d="M14 20l5 5 5-6" fill="none" stroke="#7a5010" strokeWidth="2" /></S>,
  terminal: <S><path d="M3 11h8v17H3z" fill="#c9ccc8" stroke="#777" /><path d="M8 4h23l-1 18H9z" fill="#d9dcd8" stroke="#888" /><path d="M10 6h19v13H11z" fill="#0a3a14" /><path d="M12 12l3-4 2 8 3-8 2 7 3-7 3 8" fill="none" stroke="#39d64a" strokeWidth="1.300" /><ellipse cx="22" cy="28" rx="8" ry="4" fill="#e4e4e0" stroke="#999" /></S>,
  shield: <S>
    <circle cx="17" cy="17" r="14" fill="#2a63b4" />
    <path d="M2 10q2-2 4-5 3 4 8 4 4 1 5 4-5 1-5 5 3 6 9 3l2 11H14Q1 28 2 16z" fill="#e8701a" />
    <path d="M27 4q9 8 4 17l-4-3q3-7 0-14z" fill="#fbc22c" />
    <path d="M21 21q5 0 6-2 2 2 6 2 0 10-6 13-6-3-6-13z" fill="#f4d43c" stroke="#ddd" />
    <path d="M27 19v7h-6q0-3 0-5 4 0 6-2zM27 26h6q-1 6-6 8z" fill="#2a6ac8" />
  </S>,
};

type Task = { icon: string; open?: boolean; stack?: boolean; current?: boolean };
const tasks: Task[] = [
  { icon: "explorer", open: true, stack: true },
  { icon: "wmp" }, { icon: "ring" }, { icon: "notepad" }, { icon: "remote" }, { icon: "editor" }, { icon: "snip" },
  { icon: "firefox", open: true, stack: true },
  { icon: "tftp" },
  { icon: "chrome", open: true, stack: true },
  { icon: "doc" }, { icon: "vbox" }, { icon: "foobar" }, { icon: "capture" },
  { icon: "talk", open: true, stack: true },
  { icon: "word", open: true, stack: true },
  { icon: "outlook", open: true, stack: true },
  { icon: "ie", open: true, stack: true, current: true },
  { icon: "shield" },
  { icon: "terminal", open: true },
];

function Taskbar() {
  return (
    <div className={`flex h-[40px] items-stretch border-t border-[#0a1424] bg-[linear-gradient(90deg,#1c2d58_0%,#23386c_10%,#1d3e7a_14%,#335c9c_19%,#1b4480_24%,#2a4e82_50%,#26497e_66%,#164680_76%,#1a4078_84%,#152c50_95%,#1a2c48_100%)] text-white ${UI}`}>
      <div className="flex w-[54px] items-center justify-center">
        <svg width="38" height="38" viewBox="0 0 38 38">
          <defs><radialGradient id="orb" cx=".5" cy=".95" r=".95"><stop offset="0" stopColor="#45d0f4" /><stop offset=".5" stopColor="#1f5f98" /><stop offset="1" stopColor="#a9c0d4" /></radialGradient></defs>
          <circle cx="19" cy="19" r="18" fill="url(#orb)" stroke="#8fb0c8" />
          <path d="M11 10q4-2 7.500 0l-1 8q-4-2-7.500 0z" fill="#e8632a" /><path d="M19.500 10.500q3.500 2 8 0l-1.500 8q-4 2-7.500 0z" fill="#8cc63e" />
          <path d="M9.700 19.500q4-2 7.500 0l-1 8q-4-2-7.500 0z" fill="#3fa0e8" /><path d="M18.500 20q3.500 2 7.500 0l-1.500 8q-4 2-7 0z" fill="#fbc52c" />
        </svg>
      </div>
      {tasks.map((t) => (
        <div key={t.icon} className="flex w-[62.150px] shrink-0 items-stretch justify-center pb-[1px]">
          {t.open ? (
            <div className="relative flex items-stretch">
              <div className={`flex w-[52px] items-center justify-center rounded-[3px] border border-white/50 ${t.current ? "bg-gradient-to-b from-[#a9bdd8] to-[#8ea9cc]" : "bg-gradient-to-b from-[#a3b2cc]/80 via-[#5f789f]/80 to-[#48658f]/80"}`}>
                {t.icon === "ie" ? <IeIcon size={32} /> : icons[t.icon]}
              </div>
              {t.stack && <div className="absolute -right-[5px] top-0 h-full w-[5px] rounded-r-[2px] border border-l-0 border-white/40 bg-white/15" />}
            </div>
          ) : (
            <div className="flex items-center">{icons[t.icon]}</div>
          )}
        </div>
      ))}
      <div className="ml-auto flex items-center">
        <span className="w-[23px] pb-[7px] font-['Liberation_Serif',serif] text-[13px] tracking-[-0.5px]">CH</span>
        <svg className="mb-[4px]" width="16" height="14" viewBox="0 0 16 14"><path d="M7 5q0-2 2-2t4-3" fill="none" stroke="#ddd" /><rect x=".5" y="5.500" width="15" height="8" fill="#ddd" stroke="#777" /><path d="M2 8h12M2 10h12M4 12h8" stroke="#666" strokeDasharray="1.500 1" /></svg>
        <svg className="mb-[6px] ml-[6px]" width="16" height="16" viewBox="0 0 16 16"><circle cx="8" cy="8" r="7.300" fill="#1c35b8" stroke="#d6dcf2" /><text x="8" y="12.500" fontSize="12" fontWeight="bold" textAnchor="middle" fill="#fff" fontFamily="Liberation Sans">?</text></svg>
        <svg className="mb-[6px] ml-[9px]" width="9" height="18" viewBox="0 0 9 18"><path d="M3 .5h5.500v3.500H3zM.5 2.500H6V6H.5z" fill="none" stroke="#fff" /><path d="M2 14h5L4.500 17z" fill="#fff" /></svg>
        <svg className="ml-[11px] mt-[2px]" width="8" height="5"><path d="M0 4.500h8L4 0z" fill="#fff" /></svg>
        <svg className="ml-[13px] mt-[3px]" width="16" height="15" viewBox="0 0 16 15"><path d="M5 4h10v7H5z" fill="#2c4a78" stroke="#fff" strokeWidth="1.400" /><path d="M8 14h6M10 11v3" stroke="#fff" strokeWidth="1.400" /><path d="M1 1v4h3V1M2.500 5v6H5" fill="none" stroke="#fff" strokeWidth="1.300" /></svg>
        <svg className="ml-[9px] mt-[3px]" width="16" height="15" viewBox="0 0 16 15"><path d="M1 5h2l4-4v12L3 9H1z" fill="#fff" /><circle cx="10.500" cy="10" r="4.500" fill="#c8201c" stroke="#fff" strokeWidth=".8" /><path d="M8 8l5 4" stroke="#fff" strokeWidth="1.500" /></svg>
        <svg className="ml-[8px] mt-[3px]" width="16" height="16" viewBox="0 0 16 16"><path d="M1.500 1v14" stroke="#fff" strokeWidth="1.500" /><path d="M3 2h10v7H3z" fill="#fff" /><circle cx="11" cy="11" r="4.500" fill="#d8302a" /><path d="M9 9l4 4M13 9l-4 4" stroke="#fff" strokeWidth="1.500" /></svg>
        <div className="ml-[12px] w-[76px] whitespace-nowrap text-center text-[12px] leading-[18px] tracking-[0.15px]">17:09<br />2012/04/16</div>
      </div>
      <div className="ml-[7px] mr-[2px] w-[13px] border border-white/40 bg-gradient-to-b from-[#6a7f9e] to-[#2c4468]" />
    </div>
  );
}

/* ---------- application ---------- */

export default function App() {
  return (
    <div className={`flex h-[1080px] w-[1920px] flex-col overflow-hidden bg-white ${VERDANA}`}>
      <div className={`flex h-[57px] flex-col border-b border-[#16263f] bg-[linear-gradient(90deg,#5e7ba4_0%,#4c6a96_8%,#2c5088_16%,#123468_18%,#1c4d8a_19.500%,#0d3168_21%,#0d3168_30%,#0c2f68_55%,#1a4684_72%,#3f70b4_78%,#3f6cb0_83%,#47688f_88%,#48689c_91%,#5272ac_93%,#4d6c8e_95%,#56748c_100%)] ${UI}`}>
        <TitleBar />
        <NavBar />
      </div>
      <div className={`flex h-[62px] flex-col bg-gradient-to-b from-[#f3f8fd] via-[#e2eef9] via-25% to-[#e3eef9] ${UI}`}>
        <FavoritesBar />
        <TabRow />
      </div>
      <div className="mr-[2px] flex h-[899px] flex-col border-l-2 border-t border-[#8a8a8a]">
        <PageHeader />
        <div className="flex min-h-0 flex-1">
          <Sidebar />
          <main className="flex-1">
            <div className="flex h-[63px] items-center border-b border-[#dcdcdc] pl-[24px] pt-[12px] text-[24px] leading-none text-[#111]">
              <span className="tracking-[-3.600px]">カメラ</span>
              <span className="mb-[6px] ml-[11px] mr-[10px]">-</span>
              <span className="tracking-[0px] text-[#1280c8]">スケジュール</span>
            </div>
            <div className="h-[61px] pl-[22px] pt-[15px]">
              <div className="flex h-[32px] w-[60px] items-center justify-center rounded-[3px] border border-[#b0b0b0] bg-gradient-to-b from-white to-[#e6e6e6] pb-[2px] pl-[2px] text-[14px] font-bold tracking-[0.4px] text-black shadow-[0_1px_2px_#aaa]">保存</div>
            </div>
            <CameraTable />
            <Schedule />
          </main>
        </div>
      </div>
      <StatusBar />
      <Taskbar />
    </div>
  );
}
